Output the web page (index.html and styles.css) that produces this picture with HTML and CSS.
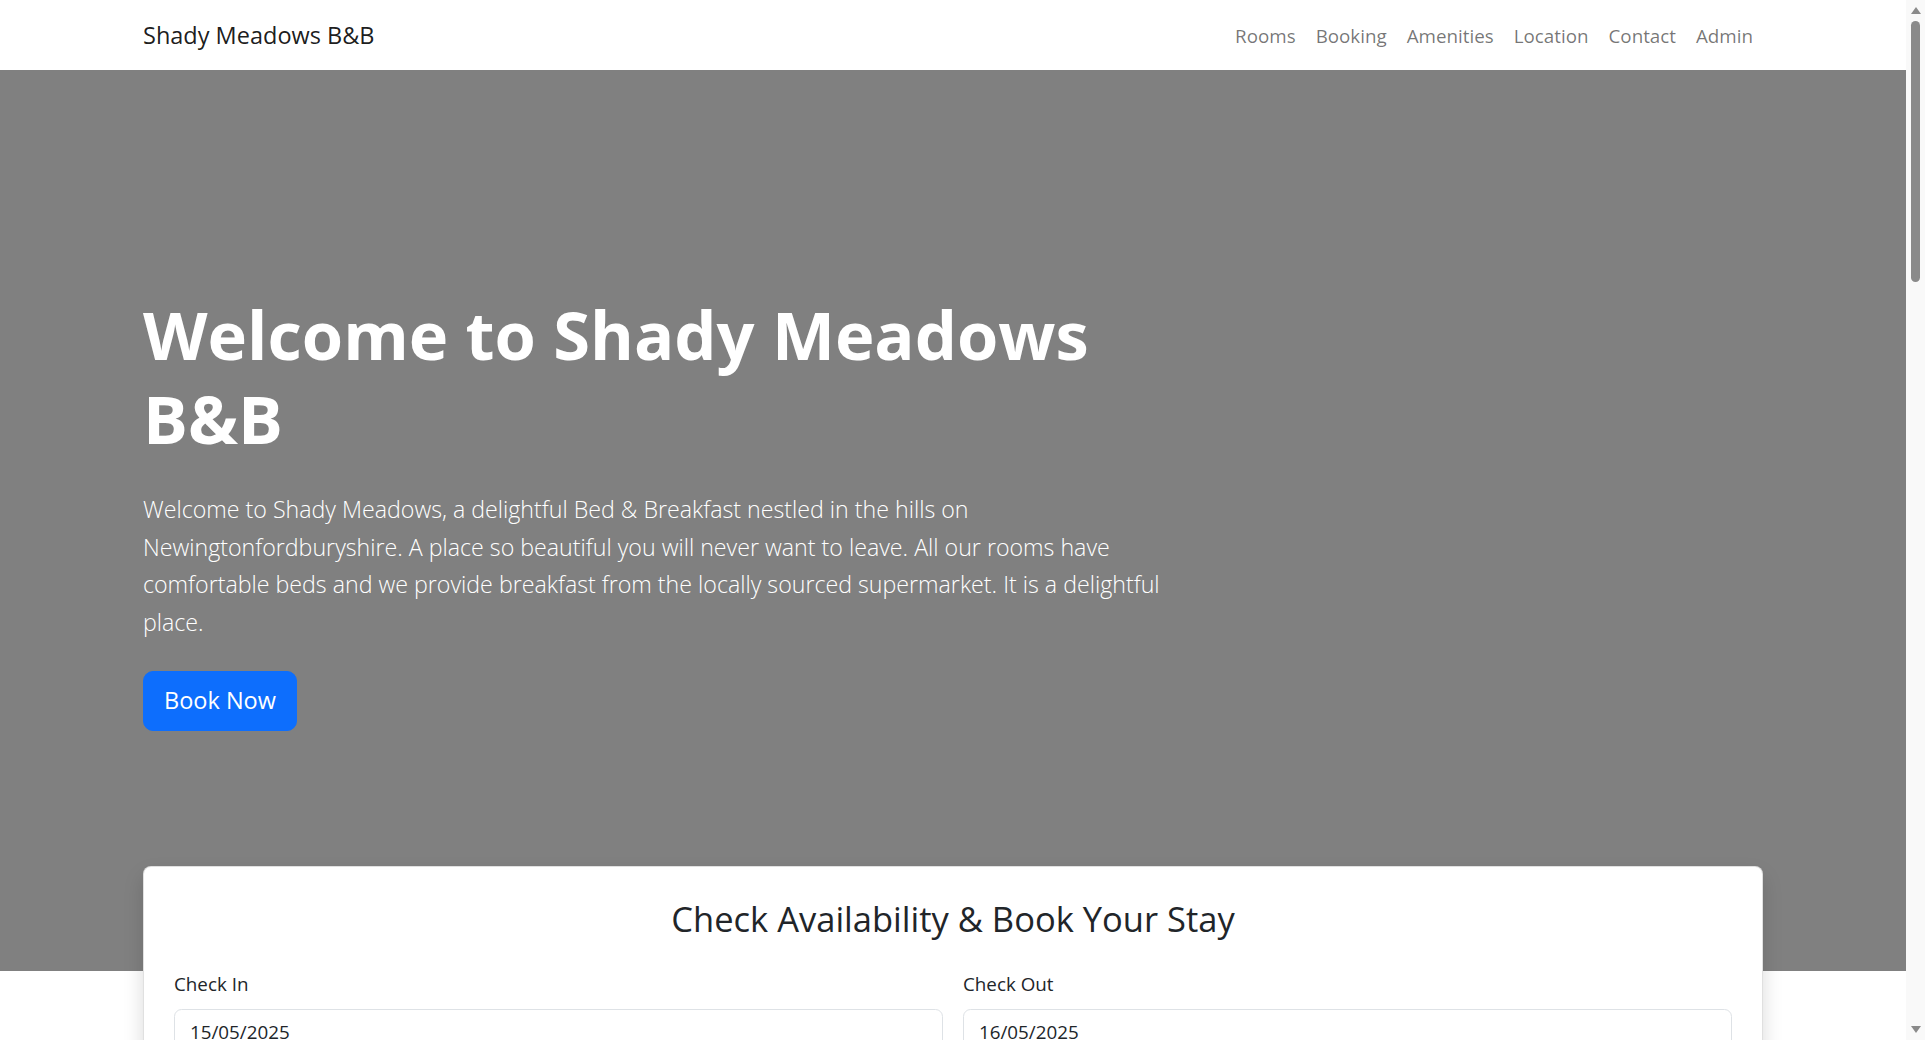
FILE: index.html
```html
<!DOCTYPE html>
<html lang="en">
<head>
<meta charset="utf-8">
<title>Shady Meadows B&amp;B</title>
<link rel="stylesheet" href="styles.css">
</head>
<body>
<div class="page">
<nav class="navbar">
  <div class="container nav-inner">
    <a class="brand" href="#">Shady Meadows B&amp;B</a>
    <ul class="nav-links">
      <li><a href="#rooms">Rooms</a></li>
      <li><a href="#booking">Booking</a></li>
      <li><a href="#amenities">Amenities</a></li>
      <li><a href="#location">Location</a></li>
      <li><a href="#contact">Contact</a></li>
      <li><a href="#admin">Admin</a></li>
    </ul>
  </div>
</nav>

<section class="hero">
  <div class="container">
    <div class="hero-col">
      <h1 class="hero-title">Welcome to Shady Meadows B&amp;B</h1>
      <p class="lead">Welcome to Shady Meadows, a delightful Bed &amp; Breakfast nestled in the hills on Newingtonfordburyshire. A place so beautiful you will never want to leave. All our rooms have comfortable beds and we provide breakfast from the locally sourced supermarket. It is a delightful place.</p>
      <a class="btn-book" href="#booking">Book Now</a>
    </div>
  </div>
</section>

<section class="booking" id="booking">
  <div class="container">
    <div class="card">
      <div class="card-body">
        <h2 class="card-title">Check Availability &amp; Book Your Stay</h2>
        <form class="book-form">
          <div class="field">
            <label class="form-label" for="checkin">Check In</label>
            <input class="form-control" id="checkin" type="text" value="15/05/2025">
          </div>
          <div class="field">
            <label class="form-label" for="checkout">Check Out</label>
            <input class="form-control" id="checkout" type="text" value="16/05/2025">
          </div>
          <div class="field-full">
            <button class="btn-check" type="button">Check Availability</button>
          </div>
        </form>
      </div>
    </div>
  </div>
</section>

<section class="rooms" id="rooms">
  <div class="container">
    <h2 class="section-title">Our Rooms</h2>
    <p class="section-sub">Comfortable beds and delightful breakfast from locally sourced ingredients</p>
    <div class="room-grid">
      <div class="room-card"><div class="room-img"></div><div class="room-body"><h3>Single</h3><p>Aenean porttitor mauris sit amet lacinia molestie.</p></div></div>
      <div class="room-card"><div class="room-img"></div><div class="room-body"><h3>Double</h3><p>Aenean porttitor mauris sit amet lacinia molestie.</p></div></div>
      <div class="room-card"><div class="room-img"></div><div class="room-body"><h3>Suite</h3><p>Aenean porttitor mauris sit amet lacinia molestie.</p></div></div>
    </div>
  </div>
</section>

<footer class="footer">
  <div class="container">
    <p>© Shady Meadows B&amp;B 2025</p>
  </div>
</footer>
</div>

<div class="scrollbar" aria-hidden="true">
  <span class="sb-arrow sb-up"></span>
  <span class="sb-thumb"></span>
  <span class="sb-space"></span>
  <span class="sb-arrow sb-down"></span>
</div>
</body>
</html>
```

FILE: styles.css
```css
* { box-sizing: border-box; }

html, body {
  margin: 0;
  padding: 0;
}

body {
  font-family: "Open Sans", "Noto Sans", sans-serif;
  font-size: 18.8px;
  line-height: 30px;
  color: #212529;
  background: #fff;
}

.page {
  margin-right: 19px;
}

.container {
  max-width: 1650px;
  margin: 0 auto;
  padding: 0 15px;
}

/* Navbar */
.navbar {
  background: #fff;
  padding: 11px 0 9px;
}

.nav-inner {
  display: flex;
  align-items: center;
  justify-content: space-between;
}

.brand {
  font-size: 23.5px;
  line-height: 37.5px;
  padding: 6.25px 0;
  color: rgba(0, 0, 0, 0.9);
  text-decoration: none;
}

.nav-links {
  display: flex;
  list-style: none;
  margin: 0;
  padding: 0;
}

.nav-links a {
  display: block;
  padding: 10px 10px;
  color: rgba(0, 0, 0, 0.55);
  text-decoration: none;
  font-size: 18.8px;
  line-height: 30px;
}

/* Hero */
.hero {
  background: #808080;
  color: #fff;
  padding: 223px 0 240px;
}

.hero-col {
  max-width: 1070px;
}

.hero-title {
  margin: 0 0 30px;
  font-size: 66.8px;
  line-height: 84px;
  font-weight: 700;
}

.lead {
  margin: 0 0 30px;
  font-size: 23.2px;
  line-height: 37.5px;
  font-weight: 300;
}

.btn-book {
  display: inline-block;
  background: #0d6efd;
  color: #fff;
  text-decoration: none;
  border: 1px solid #0d6efd;
  border-radius: 10px;
  padding: 10px 20px;
  font-size: 23.5px;
  line-height: 37.5px;
}

/* Booking card */
.booking {
  margin-top: -105px;
}

.card {
  background: #fff;
  border: 1px solid rgba(0, 0, 0, 0.12);
  border-radius: 8px;
  box-shadow: 0 10px 20px rgba(0, 0, 0, 0.15);
}

.card-body {
  padding: 28px 30px 30px;
}

.card-title {
  margin: 0 0 26px;
  text-align: center;
  font-size: 34.5px;
  line-height: 48px;
  font-weight: 500;
}

.book-form {
  display: grid;
  grid-template-columns: 1fr 1fr;
  column-gap: 20px;
  row-gap: 20px;
}

.field-full { grid-column: 1 / -1; text-align: center; }

.form-label {
  display: block;
  margin-bottom: 10px;
}

.form-control {
  display: block;
  width: 100%;
  font-family: inherit;
  font-size: 18.8px;
  line-height: 30px;
  padding: 7.5px 15px;
  color: #212529;
  border: 1px solid #dee2e6;
  border-radius: 7.5px;
  background: #fff;
}

.btn-check {
  font-family: inherit;
  font-size: 23.5px;
  line-height: 37.5px;
  padding: 10px 20px;
  color: #fff;
  background: #0d6efd;
  border: 1px solid #0d6efd;
  border-radius: 10px;
}

/* Rooms */
.rooms {
  padding: 120px 0;
}

.section-title {
  text-align: center;
  font-size: 34.5px;
  line-height: 48px;
  font-weight: 500;
  margin: 0 0 10px;
}

.section-sub {
  text-align: center;
  color: #6c757d;
  margin: 0 0 40px;
}

.room-grid {
  display: grid;
  grid-template-columns: repeat(3, 1fr);
  gap: 30px;
}

.room-card {
  border: 1px solid rgba(0, 0, 0, 0.12);
  border-radius: 8px;
  overflow: hidden;
}

.room-img {
  height: 500px;
  background: #d9d9d9;
}

.room-body { padding: 20px; }
.room-body h3 { margin: 0 0 10px; font-weight: 500; }

.footer {
  background: #212529;
  color: #fff;
  padding: 600px 0 60px;
}

/* Window scrollbar drawn over the page edge */
.scrollbar {
  position: fixed;
  top: 0;
  right: 0;
  bottom: 0;
  width: 19px;
  background: #f9f9f9;
  display: flex;
  flex-direction: column;
  align-items: center;
}

.sb-arrow {
  width: 0;
  height: 0;
  border-left: 5px solid transparent;
  border-right: 5px solid transparent;
  margin: 7px 0;
}

.sb-up { border-bottom: 7px solid #8a8a8a; }
.sb-down { border-top: 7px solid #8a8a8a; }

.sb-thumb {
  width: 9px;
  height: 261px;
  margin-top: 0;
  border-radius: 5px;
  background: #8a8a8a;
}

.sb-space { flex: 1; }
```
